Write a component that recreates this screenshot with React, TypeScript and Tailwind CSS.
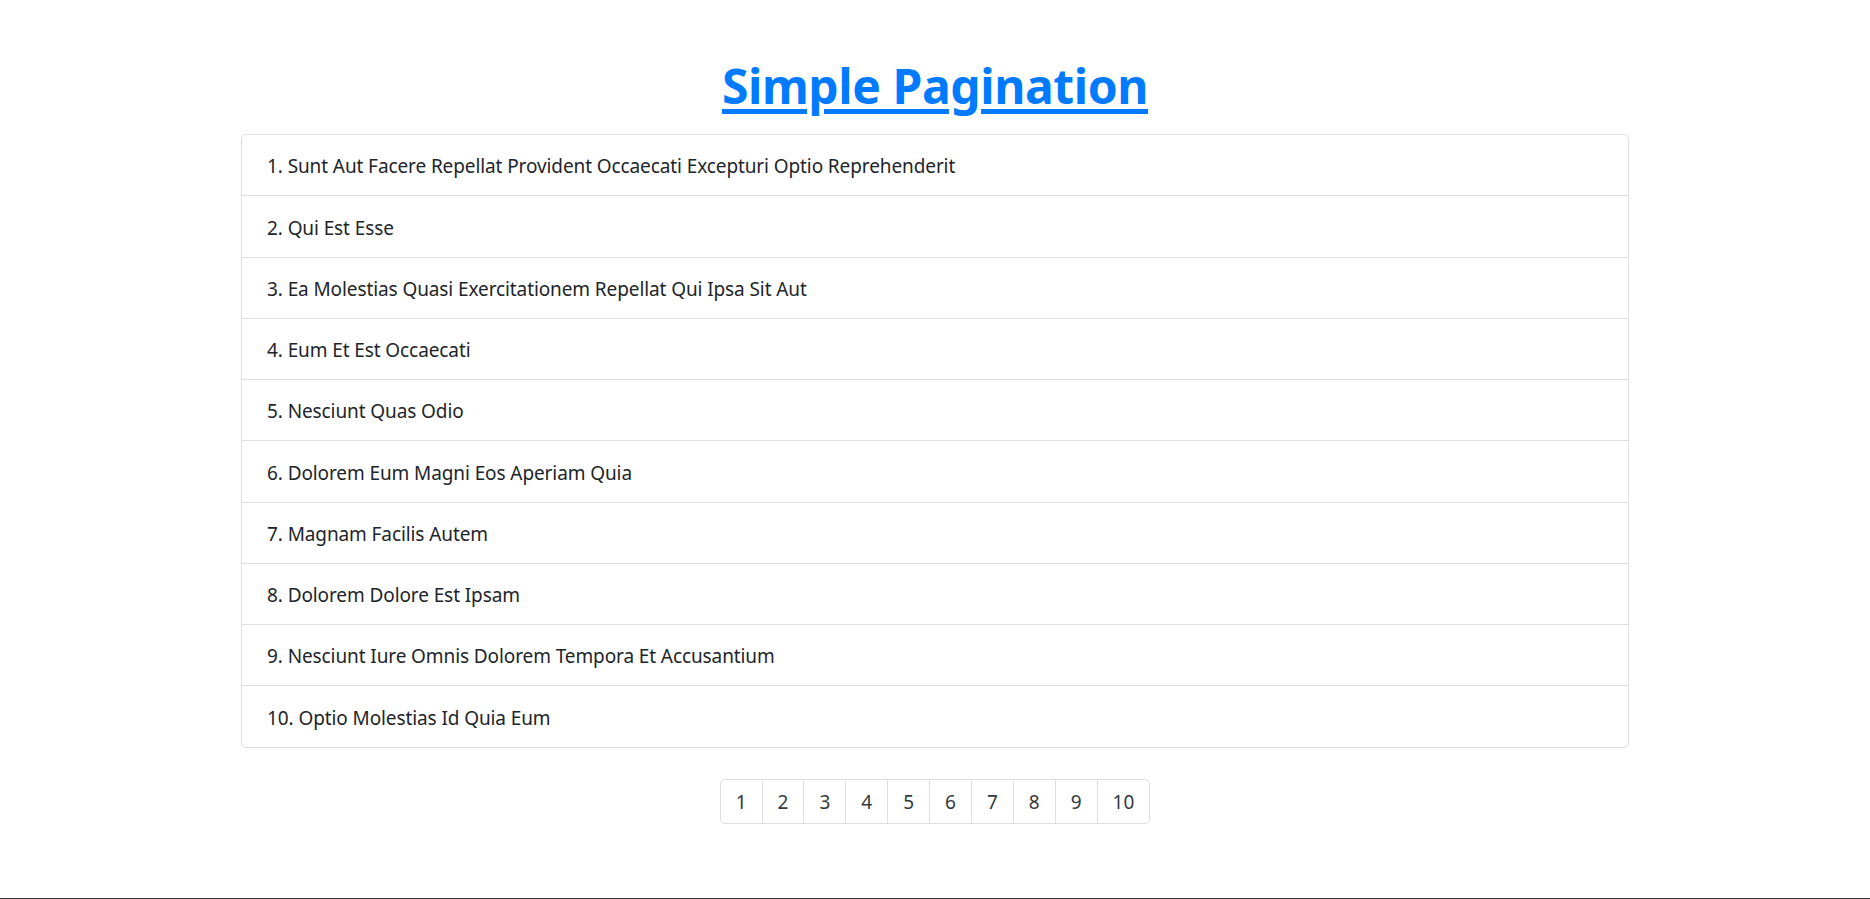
import React from "react";

const posts = [
  "Sunt Aut Facere Repellat Provident Occaecati Excepturi Optio Reprehenderit",
  "Qui Est Esse",
  "Ea Molestias Quasi Exercitationem Repellat Qui Ipsa Sit Aut",
  "Eum Et Est Occaecati",
  "Nesciunt Quas Odio",
  "Dolorem Eum Magni Eos Aperiam Quia",
  "Magnam Facilis Autem",
  "Dolorem Dolore Est Ipsam",
  "Nesciunt Iure Omnis Dolorem Tempora Et Accusantium",
  "Optio Molestias Id Quia Eum",
];

const pages = [1, 2, 3, 4, 5, 6, 7, 8, 9, 10];

export default function App() {
  return (
    <div className="flex min-h-screen flex-col bg-white font-['Noto_Sans',sans-serif] text-[#212529]">
      <main className="flex-1 pt-[56px]">
        <div className="mx-auto w-[1388px]">
          {/* Title */}
          <h1 className="mb-[18px] text-center text-[48px] font-bold leading-[60px] tracking-[-0.4px]">
            <a href="#" className="text-[#007bff] underline decoration-[5px] underline-offset-[5px]">
              Simple Pagination
            </a>
          </h1>

          {/* Post list */}
          <ul className="overflow-hidden rounded-[5px] border border-[#dfdfdf]">
            {posts.map((title, i) => (
              <li
                key={i}
                className="flex h-[61.25px] items-center border-b border-[#dfdfdf] px-[25px] pt-[3px] text-[19px] tracking-[-0.1px] last:h-[60.25px] last:border-b-0"
              >
                {i + 1}. {title}
              </li>
            ))}
          </ul>

          {/* Pagination */}
          <div className="mt-[31px] flex justify-center">
            <nav className="flex overflow-hidden rounded-[5px] border border-[#dfdfdf]">
              {pages.map((p) => (
                <a
                  key={p}
                  href="#"
                  className="flex h-[43px] items-center border-l border-[#dfdfdf] px-[15px] pt-[2px] text-[19px] text-[#343a40] first:border-l-0"
                >
                  {p}
                </a>
              ))}
            </nav>
          </div>
        </div>
      </main>
      <div className="h-px bg-[#343a40]" />
    </div>
  );
}
